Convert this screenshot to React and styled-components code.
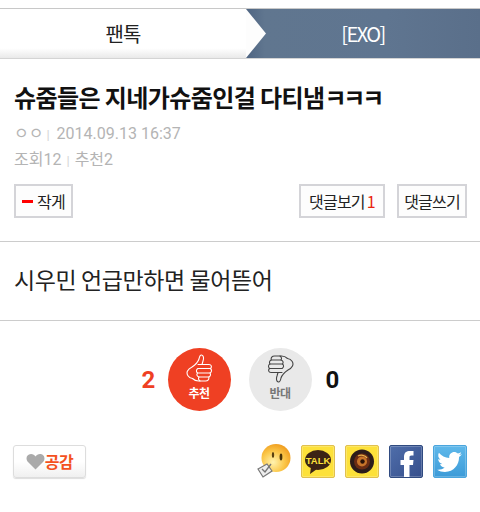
import React from "react";
import styled, { createGlobalStyle } from "styled-components";

const GlobalStyle = createGlobalStyle`
  html, body {
    margin: 0;
    background: #fff;
    font-family: "Noto Sans CJK KR", "Roboto", sans-serif;
  }
`;

const Page = styled.div`
  width: 480px;
  height: 512px;
  overflow: hidden;
  padding-top: 8px;
  box-sizing: border-box;
`;

const Breadcrumb = styled.nav`
  display: flex;
  height: 51px;
  border-top: 1px solid #c8c8c8;
  border-bottom: 1px solid #d4d4d4;
  box-sizing: border-box;
`;

const BoardCrumb = styled.div`
  position: relative;
  z-index: 1;
  width: 246px;
  display: flex;
  align-items: center;
  justify-content: center;
  font-size: 20px;
  letter-spacing: -1px;
  color: #222;
  background: linear-gradient(#fff 80%, #e9e9e9);
`;

const CrumbArrow = styled.svg`
  position: absolute;
  left: 246px;
  top: 0;
  width: 20px;
  height: 49px;
`;

const GroupCrumb = styled.div`
  flex: 1;
  display: flex;
  align-items: center;
  justify-content: center;
  font-size: 20px;
  letter-spacing: -1.5px;
  color: #fff;
  background: linear-gradient(90deg, #4f6582, #60768f 8%, #5f7590 60%, #5a6f8a);
`;

const Header = styled.header`
  padding: 0 13px 0 14px;
  height: 183px;
  box-sizing: border-box;
  border-bottom: 1px solid #ccc;
`;

const Title = styled.h1`
  margin: 0;
  padding-top: 20px;
  font-size: 24px;
  line-height: 36px;
  font-weight: 700;
  letter-spacing: -0.6px;
  color: #111;
  white-space: nowrap;
`;

const TitleJamo = styled.span`
  letter-spacing: -3.2px;
`;

const MetaLine = styled.div`
  margin-top: ${(p) => p.$top}px;
  font-family: "Roboto", "Noto Sans CJK KR", sans-serif;
  font-size: 16px;
  line-height: 24px;
  color: #b4b4b4;
  white-space: nowrap;
`;

const Sep = styled.span`
  color: #d4d4d4;
  font-size: 13px;
  margin: 0 ${(p) => p.$gap}px;
`;

const ButtonRow = styled.div`
  display: flex;
  align-items: center;
  gap: 12px;
  margin-top: 11px;
`;

const SmallButton = styled.button`
  height: 34px;
  width: ${(p) => p.$w}px;
  margin-left: ${(p) => (p.$push ? "auto" : "0")};
  display: flex;
  align-items: center;
  justify-content: center;
  gap: 4px;
  padding: 0;
  background: #fdfdfd;
  border: 2px solid #d4d4d8;
  font-family: inherit;
  font-size: 16px;
  letter-spacing: -0.8px;
  color: #222;
`;

const MinusMark = styled.i`
  width: 11px;
  height: 3px;
  background: #f00;
`;

const CountMark = styled.span`
  color: #e8230f;
  margin-left: -2px;
`;

const Body = styled.div`
  height: 79px;
  box-sizing: border-box;
  padding: 19px 14px 0;
  font-size: 23px;
  line-height: 36px;
  letter-spacing: -0.4px;
  color: #222;
  border-bottom: 1px solid #ccc;
`;

const VoteRow = styled.div`
  display: flex;
  align-items: center;
  justify-content: center;
  margin-top: 27px;
  height: 63px;
`;

const VoteCount = styled.span`
  width: 13px;
  font-family: "Roboto", sans-serif;
  font-size: 24px;
  font-weight: 700;
  color: ${(p) => p.$color};
`;

const VoteButton = styled.div`
  width: 63px;
  height: 63px;
  margin: 0 ${(p) => p.$mr}px 0 ${(p) => p.$ml}px;
  border-radius: 50%;
  display: flex;
  flex-direction: column;
  align-items: center;
  background: ${(p) => p.$bg};
  color: ${(p) => p.$fg};
  font-size: 12px;
  font-weight: 700;
  line-height: 14px;
  letter-spacing: -0.5px;
  svg {
    margin-top: 6px;
    margin-bottom: 3px;
  }
`;

const BottomRow = styled.div`
  display: flex;
  align-items: center;
  margin-top: 33px;
  padding: 0 13px;
`;

const LikeButton = styled.div`
  width: 73px;
  height: 33px;
  box-sizing: border-box;
  display: flex;
  align-items: center;
  justify-content: center;
  border: 1px solid #ddd;
  border-radius: 3px;
  box-shadow: 0 1px 1px #ddd;
  background: linear-gradient(#fff 50%, #f0f0f0);
  font-size: 16px;
  font-weight: 700;
  letter-spacing: -0.5px;
  color: #f4511e;
`;

const ShareList = styled.div`
  margin-left: auto;
  display: flex;
  align-items: center;
  gap: 10px;
`;

const ShareTile = styled.div`
  width: 34px;
  height: 33px;
  box-sizing: border-box;
  overflow: hidden;
  border: 1px solid ${(p) => p.$line};
  border-radius: 2px;
  background: ${(p) => p.$bg};
  box-shadow: inset 0 0 0 1px rgba(255, 255, 255, 0.22);
  svg {
    display: block;
  }
`;

const ThumbIcon = ({ color, down }) => (
  <svg width="27" height="29" viewBox="0 0 27 29" fill="none" stroke={color} strokeWidth="1.1" strokeLinejoin="round" strokeLinecap="round">
    <g transform={down ? "rotate(180 13.5 14.5)" : undefined}>
      <path d="M6 13 C9 11 12 8 13 5 C13.5 2.5 14 0.8 15.5 1 C17.5 1.3 18 4 17 7 L16 10.5 L23 10.5 C25.5 10.5 26 13 24.5 14.5 C26 16 25.8 18.2 24 19 C25 20.5 24.4 22.5 22.8 23 C23.2 25.5 22 27 19.5 27 L12.5 27 C9.5 27 8 26 6.5 24.5 C2.5 24 0 20 1.5 17 C2.5 15 4 14 6 13 Z" />
      <path d="M12 14.5 L24.5 14.5 M11.5 19 L24 19 M13 23 L22.8 23" />
      <path d="M12 10.5 L16 10.5 M12 14.5 C10 15.5 10 18 11.5 19 C10.2 20.5 11 22.5 13 23 C12 24.5 12.5 26 14 27" />
    </g>
  </svg>
);

const HeartIcon = () => (
  <svg width="19" height="17" viewBox="0 0 19 17">
    <path d="M9.5 16.5 L1.5 8.5 C-0.5 6 0.5 1 5 1 C7 1 8.5 2 9.5 3.5 C10.5 2 12 1 14 1 C18.5 1 19.5 6 17.5 8.5 Z" fill="#aaa" />
  </svg>
);

const SmileyIcon = () => (
  <svg width="34" height="34" viewBox="0 0 34 34">
    <defs>
      <radialGradient id="smiley" cx="0.4" cy="0.65" r="0.7">
        <stop offset="0" stopColor="#fff3b0" />
        <stop offset="0.55" stopColor="#fbc84a" />
        <stop offset="1" stopColor="#ef9a1c" />
      </radialGradient>
    </defs>
    <ellipse cx="19" cy="14" rx="14.5" ry="14" fill="url(#smiley)" />
    <ellipse cx="16" cy="11" rx="1.2" ry="3" fill="#5a4010" />
    <ellipse cx="24" cy="13" rx="1.4" ry="3.4" fill="#4a3408" />
    <path d="M1 25 L10 20 L15 27 L6 33 Z" fill="#eee" stroke="#777" strokeWidth="1.2" />
    <path d="M5 25 L8 28 L14 20" fill="none" stroke="#777" strokeWidth="1.4" />
  </svg>
);

const TalkIcon = () => (
  <svg width="32" height="31" viewBox="0 0 32 31">
    <ellipse cx="16" cy="14" rx="13" ry="10" fill="#3b2315" />
    <path d="M9 21 L8 28 L15 23 Z" fill="#3b2315" />
    <text x="16" y="17.5" textAnchor="middle" fontFamily="Liberation Sans, sans-serif" fontWeight="700" fontSize="9.5" fill="#fde13a">TALK</text>
  </svg>
);

const LensIcon = () => (
  <svg width="32" height="31" viewBox="0 0 32 31">
    <circle cx="16" cy="15.5" r="12" fill="#2c1c1a" />
    <circle cx="16" cy="15.5" r="8" fill="#6a2c14" />
    <circle cx="16" cy="15.5" r="5" fill="#c8742a" />
    <circle cx="16.5" cy="15.5" r="2.2" fill="#2a1208" />
    <path d="M12 10 A7 7 0 0 1 21 12" fill="none" stroke="#e8b04a" strokeWidth="1.4" />
  </svg>
);

const FacebookIcon = () => (
  <svg width="32" height="31" viewBox="0 0 32 31">
    <path d="M14 31 L14 19 L10.5 19 L10.5 14 L14 14 L14 11 C14 6.5 16.5 5 20 5 L23.5 5 L23.5 9.5 L21.5 9.5 C19.7 9.5 19.5 10.3 19.5 11.5 L19.5 14 L23.5 14 L23 19 L19.5 19 L19.5 31 Z" fill="#fff" />
  </svg>
);

const TwitterIcon = () => (
  <svg width="32" height="31" viewBox="0 0 32 31">
    <path d="M28 8 C27 8.6 26 9 25 9.1 C26 8.4 26.9 7.4 27.2 6.2 C26.2 6.8 25.1 7.3 23.9 7.5 C22.9 6.5 21.6 5.9 20.2 5.9 C17.4 5.9 15.2 8.2 15.2 11 C15.2 11.4 15.2 11.8 15.3 12.1 C11.1 11.9 7.4 9.9 4.9 6.8 C3.6 9.1 4.2 12 6.5 13.6 C5.7 13.6 4.9 13.4 4.2 13 C4.2 15.5 6 17.5 8.3 18 C7.6 18.2 6.8 18.2 6 18.1 C6.7 20.1 8.5 21.6 10.7 21.6 C8.5 23.3 5.9 24.1 3.2 23.8 C5.5 25.3 8.1 26 10.9 26 C20 26 25 18.4 25 11.8 L25 11.1 C26.1 10.4 27.1 9.3 28 8 Z" fill="#fff" />
  </svg>
);

const App = () => {
  return (
    <Page>
      <GlobalStyle />
      <Breadcrumb>
        <BoardCrumb>
          팬톡
          <CrumbArrow viewBox="0 0 20 49">
            <path d="M0 0 L20 24.5 L0 49 Z" fill="#fdfdfd" />
          </CrumbArrow>
        </BoardCrumb>
        <GroupCrumb>[EXO]</GroupCrumb>
      </Breadcrumb>
      <Header>
        <Title>
          슈줌들은 지네가슈줌인걸 다티냄<TitleJamo>ㅋㅋㅋ</TitleJamo>
        </Title>
        <MetaLine $top={7}>
          ㅇㅇ<Sep $gap={3}>|</Sep> 2014.09.13 16:37
        </MetaLine>
        <MetaLine $top={1}>
          조회12<Sep $gap={5}>|</Sep>추천2
        </MetaLine>
        <ButtonRow>
          <SmallButton $w={59}>
            <MinusMark />
            작게
          </SmallButton>
          <SmallButton $w={86} $push>
            댓글보기<CountMark>1</CountMark>
          </SmallButton>
          <SmallButton $w={70}>댓글쓰기</SmallButton>
        </ButtonRow>
      </Header>
      <Body>시우민 언급만하면 물어뜯어</Body>
      <VoteRow>
        <VoteCount $color="#ef4023">2</VoteCount>
        <VoteButton $bg="#ef4023" $fg="#fff" $ml={13} $mr={18}>
          <ThumbIcon color="#fff" />
          추천
        </VoteButton>
        <VoteButton $bg="#e9e9e9" $fg="#777" $ml={0} $mr={14}>
          <ThumbIcon color="#444" down />
          반대
        </VoteButton>
        <VoteCount $color="#111">0</VoteCount>
      </VoteRow>
      <BottomRow>
        <LikeButton>
          <HeartIcon />
          공감
        </LikeButton>
        <ShareList>
          <SmileyIcon />
          <ShareTile $bg="#fde13a" $line="#e0c050"><TalkIcon /></ShareTile>
          <ShareTile $bg="#fde13a" $line="#e0c050"><LensIcon /></ShareTile>
          <ShareTile $bg="linear-gradient(135deg, #4f6eaa, #364f8c)" $line="#2f4a80"><FacebookIcon /></ShareTile>
          <ShareTile $bg="linear-gradient(#5fb8ea, #3c9bd8)" $line="#4aa5dd"><TwitterIcon /></ShareTile>
        </ShareList>
      </BottomRow>
    </Page>
  );
};

export default App;
